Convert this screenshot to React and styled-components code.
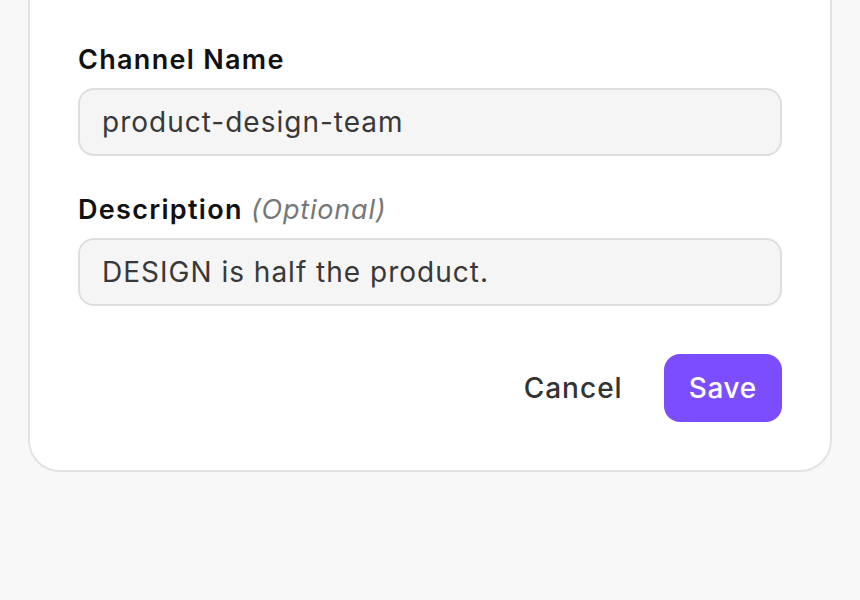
import React from 'react'
import styled, { createGlobalStyle } from 'styled-components'

const GlobalStyle = createGlobalStyle`
  html, body {
    margin: 0;
    padding: 0;
    background: #f8f8f8;
    font-family: Inter, "Noto Sans", sans-serif;
  }
`

const Page = styled.div`
  padding: 0 28px;
  height: 600px;
  overflow: hidden;
`

const Card = styled.form`
  margin-top: -8px;
  background: #fff;
  border: 2px solid #e2e2e2;
  border-radius: 0 0 32px 32px;
  padding: 48px;
  display: flex;
  flex-direction: column;
`

const Field = styled.div`
  display: flex;
  flex-direction: column;
  gap: 10px;
  margin-bottom: ${(p) => p.last ? '48px' : '36px'};
`

const Label = styled.label`
  font-size: 27px;
  line-height: 36px;
  font-weight: 600;
  letter-spacing: 1.3px;
  color: #111;
`

const Hint = styled.span`
  font-weight: 400;
  font-style: italic;
  letter-spacing: 0.8px;
  color: #777;
`

const Input = styled.input`
  box-sizing: border-box;
  height: 68px;
  width: 100%;
  padding: 0 22px;
  font-family: inherit;
  font-size: 28px;
  letter-spacing: 1px;
  color: #383838;
  background: #f5f5f5;
  border: 2px solid #dedede;
  border-radius: 16px;
  outline: none;
`

const Actions = styled.div`
  display: flex;
  justify-content: flex-end;
  align-items: center;
  gap: 21px;
`

const Button = styled.button`
  height: 68px;
  font-family: inherit;
  font-size: 28px;
  font-weight: 500;
  letter-spacing: ${(p) => p.primary ? '0.7px' : '1px'};
  border: none;
  border-radius: 16px;
  cursor: pointer;
  background: ${(p) => p.primary ? '#7c4dff' : 'transparent'};
  color: ${(p) => p.primary ? '#fff' : '#333'};
  padding: ${(p) => p.primary ? '0 25px' : '0 20px'};
`

const App = () => {
  return (
    <Page>
      <GlobalStyle />
      <Card onSubmit={(e) => e.preventDefault()}>
        <Field>
          <Label>Channel Name</Label>
          <Input defaultValue="product-design-team" />
        </Field>
        <Field last>
          <Label>Description <Hint>(Optional)</Hint></Label>
          <Input defaultValue="DESIGN is half the product." />
        </Field>
        <Actions>
          <Button type="button">Cancel</Button>
          <Button type="submit" primary>Save</Button>
        </Actions>
      </Card>
    </Page>
  )
}

export default App
